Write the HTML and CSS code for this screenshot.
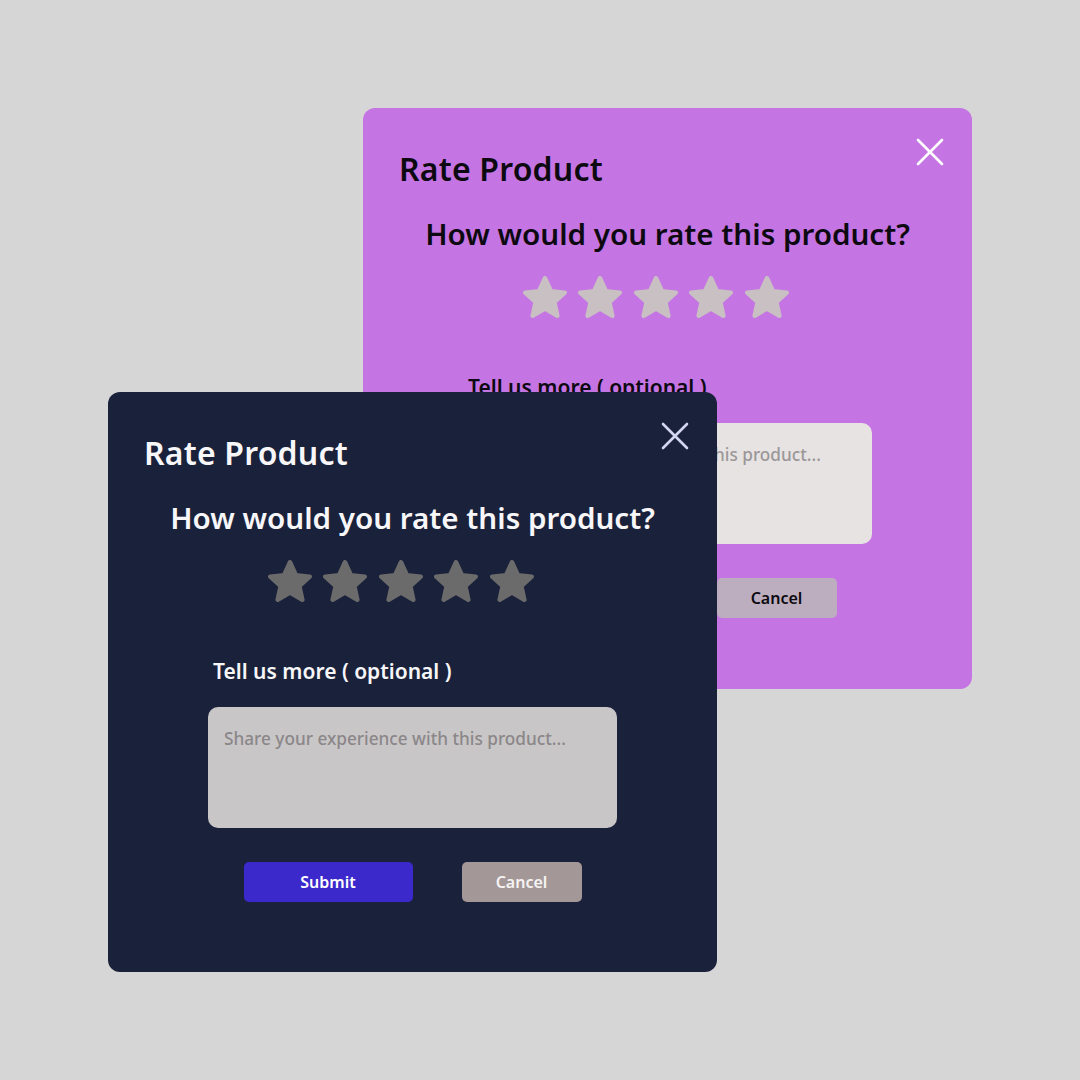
FILE: index.html
```html
<!DOCTYPE html>
<html lang="en">
<head>
<meta charset="utf-8">
<title>Rate Product</title>
<link rel="stylesheet" href="styles.css">
</head>
<body>
<div class="canvas">
  <section class="card card-purple">
    <header class="card-head">
      <h2 class="title">Rate Product</h2>
      <button class="close" aria-label="Close">
        <svg viewBox="0 0 28 28" width="28" height="28"><path d="M2 2 L26 26 M26 2 L2 26"/></svg>
      </button>
    </header>
    <p class="question">How would you rate this product?</p>
    <div class="stars">
      <svg class="star" viewBox="2.4 2 39.2 39.2"><polygon points="22,4 27.3,15.6 39.6,16.8 30.3,25.2 33,37.4 22,31 11,37.4 13.7,25.2 4.4,16.8 16.7,15.6"/></svg>
      <svg class="star" viewBox="2.4 2 39.2 39.2"><polygon points="22,4 27.3,15.6 39.6,16.8 30.3,25.2 33,37.4 22,31 11,37.4 13.7,25.2 4.4,16.8 16.7,15.6"/></svg>
      <svg class="star" viewBox="2.4 2 39.2 39.2"><polygon points="22,4 27.3,15.6 39.6,16.8 30.3,25.2 33,37.4 22,31 11,37.4 13.7,25.2 4.4,16.8 16.7,15.6"/></svg>
      <svg class="star" viewBox="2.4 2 39.2 39.2"><polygon points="22,4 27.3,15.6 39.6,16.8 30.3,25.2 33,37.4 22,31 11,37.4 13.7,25.2 4.4,16.8 16.7,15.6"/></svg>
      <svg class="star" viewBox="2.4 2 39.2 39.2"><polygon points="22,4 27.3,15.6 39.6,16.8 30.3,25.2 33,37.4 22,31 11,37.4 13.7,25.2 4.4,16.8 16.7,15.6"/></svg>
    </div>
    <div class="field">
      <label class="label">Tell us more ( optional )</label>
      <div class="textarea"><span class="placeholder">Share your experience with this product...</span></div>
    </div>
    <div class="actions">
      <button class="btn btn-submit">Submit</button>
      <button class="btn btn-cancel">Cancel</button>
    </div>
  </section>

  <section class="card card-dark">
    <header class="card-head">
      <h2 class="title">Rate Product</h2>
      <button class="close" aria-label="Close">
        <svg viewBox="0 0 28 28" width="28" height="28"><path d="M2 2 L26 26 M26 2 L2 26"/></svg>
      </button>
    </header>
    <p class="question">How would you rate this product?</p>
    <div class="stars">
      <svg class="star" viewBox="2.4 2 39.2 39.2"><polygon points="22,4 27.3,15.6 39.6,16.8 30.3,25.2 33,37.4 22,31 11,37.4 13.7,25.2 4.4,16.8 16.7,15.6"/></svg>
      <svg class="star" viewBox="2.4 2 39.2 39.2"><polygon points="22,4 27.3,15.6 39.6,16.8 30.3,25.2 33,37.4 22,31 11,37.4 13.7,25.2 4.4,16.8 16.7,15.6"/></svg>
      <svg class="star" viewBox="2.4 2 39.2 39.2"><polygon points="22,4 27.3,15.6 39.6,16.8 30.3,25.2 33,37.4 22,31 11,37.4 13.7,25.2 4.4,16.8 16.7,15.6"/></svg>
      <svg class="star" viewBox="2.4 2 39.2 39.2"><polygon points="22,4 27.3,15.6 39.6,16.8 30.3,25.2 33,37.4 22,31 11,37.4 13.7,25.2 4.4,16.8 16.7,15.6"/></svg>
      <svg class="star" viewBox="2.4 2 39.2 39.2"><polygon points="22,4 27.3,15.6 39.6,16.8 30.3,25.2 33,37.4 22,31 11,37.4 13.7,25.2 4.4,16.8 16.7,15.6"/></svg>
    </div>
    <div class="field">
      <label class="label">Tell us more ( optional )</label>
      <div class="textarea"><span class="placeholder">Share your experience with this product...</span></div>
    </div>
    <div class="actions">
      <button class="btn btn-submit">Submit</button>
      <button class="btn btn-cancel">Cancel</button>
    </div>
  </section>
</div>
</body>
</html>
```

FILE: styles.css
```css
html, body {
  margin: 0;
  padding: 0;
}
body {
  width: 1080px;
  height: 1080px;
  background: #d6d6d6;
  font-family: "Noto Sans", "DejaVu Sans", sans-serif;
  overflow: hidden;
}
.canvas {
  position: relative;
  width: 1080px;
  height: 1080px;
}
.card {
  position: absolute;
  width: 609px;
  height: 580px;
  box-sizing: border-box;
  border-radius: 12px;
  padding: 30px 28px 0 36px;
  display: flex;
  flex-direction: column;
}
.card-purple {
  left: 363px;
  top: 108px;
  height: 581px;
  background: #c574e3;
  color: #0c0a10;
}
.card-dark {
  left: 108px;
  top: 392px;
  background: #1a213a;
  color: #f7f6f8;
}
.card-head {
  display: flex;
  justify-content: space-between;
  align-items: flex-start;
}
.title {
  margin: 11px 0 0 0;
  font-size: 32px;
  line-height: 40px;
  font-weight: 600;
  letter-spacing: 0.2px;
}
.close {
  width: 28px;
  height: 28px;
  padding: 0;
  border: 0;
  background: none;
}
.close svg {
  display: block;
  fill: none;
  stroke-width: 2.6;
  stroke-linecap: round;
}
.card-purple .close svg { stroke: #ffffff; }
.card-dark .close svg { stroke: #d4d5f0; }

.question {
  margin: 26px 0 0 -8px;
  text-align: center;
  font-size: 29.6px;
  line-height: 38px;
  font-weight: 600;
}
.stars {
  margin: 23px 0 0 124px;
  display: flex;
  justify-content: flex-start;
  gap: 11.4px;
}
.star {
  width: 44px;
  height: 44px;
  display: block;
}
.star polygon {
  stroke-width: 4;
  stroke-linejoin: round;
}
.card-purple .star polygon { fill: #c8c0c2; stroke: #c8c0c2; }
.card-dark .star polygon { fill: #6b6b6c; stroke: #6b6b6c; }

.field {
  margin: 54px 0 0 64px;
  display: flex;
  flex-direction: column;
}
.label {
  margin-left: 5px;
  font-size: 21px;
  line-height: 26px;
  font-weight: 600;
}
.textarea {
  margin-top: 23px;
  width: 409px;
  height: 121px;
  box-sizing: border-box;
  border-radius: 10px;
  padding: 21px 16px;
}
.card-purple .textarea { background: #e7e3e3; }
.card-dark .textarea { background: #c9c6c8; }
.placeholder {
  font-size: 17.2px;
  line-height: 22px;
  font-weight: 500;
}
.card-purple .placeholder { color: #9b9798; }
.card-dark .placeholder { color: #8b8789; }

.actions {
  margin: 34px 0 0 -8px;
  display: flex;
  justify-content: center;
  gap: 49px;
}
.btn {
  height: 40px;
  border: 0;
  border-radius: 5px;
  font-family: inherit;
  font-size: 16px;
  font-weight: 600;
  padding: 0;
}
.btn-submit {
  width: 169px;
  background: #3b29cc;
  color: #ffffff;
}
.btn-cancel {
  width: 120px;
}
.card-purple .btn-cancel { background: #bdaebf; color: #0c0a10; }
.card-dark .btn-cancel { background: #a39797; color: #f6f3f3; }
```
